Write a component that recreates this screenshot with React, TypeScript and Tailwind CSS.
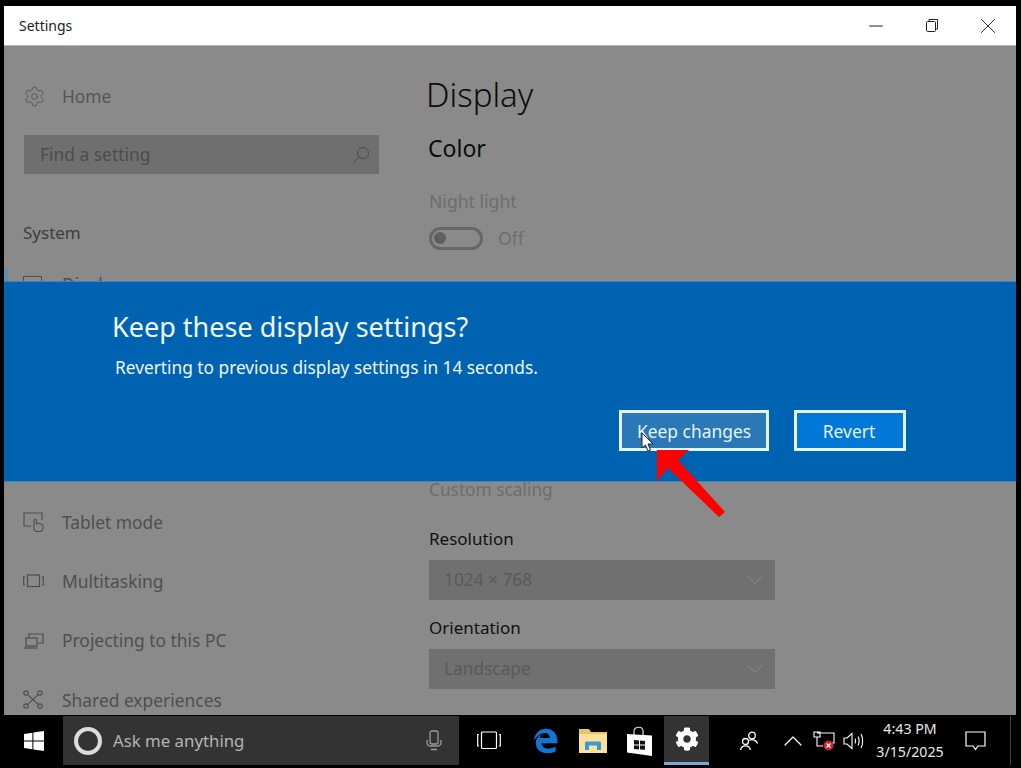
import { ChevronDown, ChevronUp, Minus, Settings, X } from "lucide-react";
import { FaCog } from "react-icons/fa";

const font = { fontFamily: '"Noto Sans", "Open Sans", sans-serif' };

function TabletIcon() {
  return (
    <svg width="21" height="20" viewBox="0 0 21 20" fill="none" stroke="#4e4e4e" strokeWidth="1.1">
      <path d="M8 14H1V1h18v7" />
      <path d="M11 17.500V8.500a1.200 1.200 0 0 1 2.400 0V12l1.800-.8a1 1 0 0 1 1.300.2l2.500 1.200c.7.400 1 1 1 1.700V16c0 2-1.600 3.500-3.600 3.500H14.500c-1.600 0-2.800-.8-3.500-2z" />
    </svg>
  );
}

function MultitaskIcon() {
  return (
    <svg width="21" height="14" viewBox="0 0 21 14" fill="none" stroke="#4e4e4e" strokeWidth="1.2">
      <rect x="4.500" y="1" width="12" height="11.500" />
      <path d="M2 2.500H.7v8.500H2M19 2.500h1.300v8.500H19" />
    </svg>
  );
}

function ProjectIcon() {
  return (
    <svg width="21" height="16" viewBox="0 0 21 16" fill="none" stroke="#4e4e4e" strokeWidth="1.2">
      <path d="M6 5V1h14v9h-5" />
      <rect x="3" y="5" width="11" height="8" />
      <path d="M.5 15h14" />
    </svg>
  );
}

function ShareIcon() {
  return (
    <svg width="20" height="19" viewBox="0 0 20 19" fill="none" stroke="#4e4e4e" strokeWidth="1.2">
      <circle cx="3" cy="3" r="2.200" />
      <circle cx="17" cy="3" r="2.200" />
      <circle cx="3" cy="16" r="2.200" />
      <circle cx="17" cy="16" r="2.200" />
      <path d="M4.600 4.600l10.800 9.800M15.400 4.600L4.600 14.400" />
    </svg>
  );
}

function SearchGlyph() {
  return (
    <svg width="18" height="18" viewBox="0 0 18 18" fill="none" stroke="#4c4c4c" strokeWidth="1">
      <circle cx="11" cy="7" r="5.500" />
      <path d="M7 11l-6 6" />
    </svg>
  );
}

function NavRow({ icon, label }: { icon: React.ReactNode; label: string }) {
  return (
    <div className="flex h-[59.3px] items-center">
      <div className="flex w-[39px] shrink-0 justify-start">{icon}</div>
      <span className="text-[17.4px] text-[#4f4f4f]">{label}</span>
    </div>
  );
}

function SelectBox({ value }: { value: string }) {
  return (
    <div className="flex h-[40px] w-[346px] items-center justify-between bg-[#707070] pl-[15px] pr-[6px]">
      <span className="text-[17.3px] text-[#5a5a5a]">{value}</span>
      <ChevronDown size={28} strokeWidth={0.8} color="#8f8f8f" />
    </div>
  );
}

function WindowsLogo() {
  return (
    <svg width="20" height="20" viewBox="0 0 20 20" fill="#fff">
      <path d="M0 3l8.400-1.200v7.600H0zM9.400 1.600L20 0v9.400H9.400zM0 10.400h8.400v7.800L0 17zM9.400 10.400H20V20L9.400 18.400z" />
    </svg>
  );
}

function EdgeLogo() {
  return (
    <svg width="25" height="25" viewBox="0 0 25 25">
      <path
        fill="#1277d3"
        d="M1 12.500C1.600 5.500 6.600.8 13 .8c6.600 0 11.400 4.700 11.400 12.400v2.100H8.600c.3 3.600 3 5.400 6.600 5.400 2.600 0 5-.7 7.400-2.100v5c-2.400 1.200-5.200 1.700-8.200 1.700C7.400 25 2.800 21 2.800 14.700c0-3.600 1.900-6.500 5.600-8.300-1 1.200-1.500 2.300-1.700 3.500h10.100c0-3.200-1.900-5-5-5C7.900 4.900 3.500 8 1 12.500z"
      />
    </svg>
  );
}

function FolderLogo() {
  return (
    <svg width="28" height="24" viewBox="0 0 28 24">
      <path fill="#e8c468" d="M0 0h10l2 3h16v3H0z" />
      <path fill="#fbe29a" d="M0 5h28v19H0z" />
      <path fill="#3b9ad6" d="M6 21v-7c0-1 .6-1.500 1.500-1.500h13c.9 0 1.500.5 1.500 1.500v7h-4v-4.500H10V21z" />
    </svg>
  );
}

function StoreLogo() {
  return (
    <svg width="27" height="30" viewBox="0 0 27 30">
      <path d="M8 9V5c0-5 9-5 9 0v5" fill="none" stroke="#ddd" strokeWidth="1.200" />
      <path fill="#fff" d="M1 8l25 1.500V30L1 26.500z" />
      <path fill="#111" d="M8 14l5 .4v4H8zM14 14.500l5 .4v3.600h-5zM8 19.400h5v4l-5-.4zM14 19.400h5v4.400l-5-.4z" />
    </svg>
  );
}

function PeopleIcon() {
  return (
    <svg width="18" height="20" viewBox="0 0 18 20" fill="none" stroke="#fff" strokeWidth="1.300">
      <circle cx="12" cy="4.500" r="3.300" />
      <path d="M9.500 9.500c2-1.500 6.500-1 8 3" />
      <circle cx="5.500" cy="10.500" r="3" />
      <path d="M.7 19c.5-5.500 9-5.500 9.600 0" />
    </svg>
  );
}

function NetworkIcon() {
  return (
    <svg width="22" height="20" viewBox="0 0 22 20" fill="none">
      <path d="M4 2h17v10h-4M1 1h6v5H1zM4 6v9h6" stroke="#fff" strokeWidth="1.100" />
      <circle cx="15.500" cy="14.500" r="5" fill="#c8232f" />
      <path d="M13.500 12.500l4 4M17.500 12.500l-4 4" stroke="#fff" strokeWidth="1.300" />
    </svg>
  );
}

function SpeakerIcon() {
  return (
    <svg width="21" height="18" viewBox="0 0 21 18" fill="none" stroke="#fff" strokeWidth="1.100">
      <path d="M1 6h3l5-4.500v15L4 12H1z" />
      <path d="M12 6.500c.8 1.500.8 3.500 0 5M15 4.500c1.400 2.800 1.400 6.200 0 9M18 2c2.200 4 2.200 10 0 14" />
    </svg>
  );
}

function MicIcon() {
  return (
    <svg width="16" height="21" viewBox="0 0 16 21" fill="none" stroke="#9a9a9a" strokeWidth="1.300">
      <rect x="4" y="1" width="8" height="13" rx="2" />
      <path d="M1 10v2.500c0 2.500 2 3.500 4 3.500h6c2 0 4-1 4-3.500V10M5 19.500h6" />
    </svg>
  );
}

function TaskViewIcon() {
  return (
    <svg width="24" height="19" viewBox="0 0 24 19" fill="none" stroke="#fff" strokeWidth="1.200">
      <rect x="4.500" y="1" width="15" height="16.500" rx="1" />
      <path d="M2 3.500H.7v11.500H2M22 3.500h1.300v11.500H22" />
    </svg>
  );
}

function ActionCenterIcon() {
  return (
    <svg width="21" height="20" viewBox="0 0 21 20" fill="none" stroke="#fff" strokeWidth="1.200">
      <path d="M1 1h19v14h-7l-2.500 3.500L8 15H1z" />
    </svg>
  );
}

function RestoreIcon() {
  return (
    <svg width="12" height="13" viewBox="0 0 12 13" fill="none" stroke="#222" strokeWidth="1">
      <rect x="0.500" y="2.500" width="9" height="10" rx="1" />
      <path d="M3 2.500V.5h8.500v9.500H9.500" />
    </svg>
  );
}

function Dialog() {
  return (
    <div className="absolute inset-x-0 top-[275px] h-[201px] border-y border-[#3f85bd] bg-[#0063b1] pl-[108px] pr-[110px] text-white">
      <h2 className="mt-[25px] text-[27px] leading-[40px] text-[#eef6fb]">Keep these display settings?</h2>
      <p className="ml-[3px] mt-[7px] text-[17.3px] leading-[28px] text-[#eef6fb]">
        Reverting to previous display settings in 14 seconds.
      </p>
      <div className="mt-[28px] flex justify-end gap-[25px]">
        <button className="h-[41px] w-[150px] border-[3px] border-[#e6f3fa] bg-[#2a78b6] pt-[1px] text-[17.4px] text-[#e6f3fa]">
          Keep changes
        </button>
        <button className="h-[41px] w-[112px] border-[3px] border-[#e6f3fa] bg-[#0078d7] pr-[2px] pt-[1px] text-[17.4px] text-[#e6f3fa]">
          Revert
        </button>
      </div>
    </div>
  );
}

export default function App() {
  return (
    <div className="relative flex h-[768px] w-[1021px] flex-col overflow-hidden bg-black pt-[6px]" style={font}>
      <div className="relative ml-[4px] flex h-[709px] w-[1012px] flex-col overflow-hidden">
        {/* title bar */}
        <div className="flex h-[40px] shrink-0 items-center justify-between border-b border-[#b5b5b5] bg-white pl-[15px]">
          <span className="text-[14px] text-[#222]">Settings</span>
          <div className="flex items-center">
            <div className="flex w-[48px] justify-center"><Minus size={22} strokeWidth={1.1} color="#222" /></div>
            <div className="ml-[8px] mr-[4px] flex w-[48px] justify-center"><RestoreIcon /></div>
            <div className="flex w-[56px] justify-center"><X size={26} strokeWidth={0.9} color="#222" /></div>
          </div>
        </div>

        <div className="flex flex-1 overflow-hidden bg-[#8a8a8a]">
          {/* sidebar */}
          <aside className="w-[422px] shrink-0 pl-[19px]">
            <div className="mt-[36px] flex h-[30px] items-center text-[#555]">
              <Settings size={23} strokeWidth={1} color="#555" className="-mt-[1px]" />
              <span className="ml-[16px] text-[17.3px]">Home</span>
            </div>
            <div className="ml-[1px] mt-[23px] flex h-[39px] w-[355px] items-center justify-between bg-[#6f6f6f] pl-[16px] pr-[9px]">
              <span className="text-[17.4px] text-[#4c4c4c]">Find a setting</span>
              <SearchGlyph />
            </div>
            <div className="mt-[44px] text-[17px] leading-[30px] text-[#3d3d3d]">System</div>
            <div className="relative mt-[6px]">
              <div className="absolute -left-[19px] top-[14px] h-[14px] w-[4px] bg-[#5d8cb0]" />
              <NavRow icon={<div className="h-[16px] w-[19px] border border-[#4e4e4e]" />} label="Display" />
            </div>
            <div className="mt-[179px]">
              <NavRow icon={<TabletIcon />} label="Tablet mode" />
              <NavRow icon={<MultitaskIcon />} label="Multitasking" />
              <NavRow icon={<ProjectIcon />} label="Projecting to this PC" />
              <NavRow icon={<ShareIcon />} label="Shared experiences" />
            </div>
          </aside>

          {/* main pane */}
          <main className="flex-1 pl-[2px]">
            <h1 className="-ml-[2px] mt-[24px] text-[33px] font-light leading-[50px] text-[#0c0c0c]">Display</h1>
            <h3 className="mt-[10px] text-[23px] leading-[36px] text-[#0c0c0c]">Color</h3>
            <div className="ml-[1px] mt-[22px] text-[17.6px] leading-[26px] text-[#6d6d6d]">Night light</div>
            <div className="ml-[1px] mt-[11px] flex items-center">
              <div className="flex h-[23px] w-[54px] items-center rounded-full border-[3px] border-[#666] pl-[2px]">
                <div className="h-[12px] w-[12px] rounded-full bg-[#5f5f5f]" />
              </div>
              <span className="ml-[15px] text-[17.6px] text-[#6d6d6d]">Off</span>
            </div>
            <div className="ml-[1px] mt-[226px] text-[17.3px] leading-[26px] text-[#6d6d6d]">Custom scaling</div>
            <div className="ml-[1px] mt-[23px] text-[17px] leading-[26px] text-[#111]">Resolution</div>
            <div className="ml-[1px] mt-[8px]"><SelectBox value="1024 × 768" /></div>
            <div className="ml-[1px] mt-[15px] text-[17px] leading-[26px] text-[#111]">Orientation</div>
            <div className="ml-[1px] mt-[8px]"><SelectBox value="Landscape" /></div>
          </main>
        </div>

        <Dialog />
      </div>

      {/* taskbar */}
      <div className="flex h-[50px] w-full items-center border-t border-black bg-black text-white">
        <div className="flex h-full w-[63px] items-center justify-center pl-[4px]"><WindowsLogo /></div>
        <div className="flex h-full w-[396px] items-center bg-[#333] pl-[11px] pr-[17px]">
          <div className="h-[28px] w-[28px] rounded-full border-[4px] border-[#dcdcdc]" />
          <span className="ml-[11px] flex-1 text-[16.8px] text-[#b4b4b4]">Ask me anything</span>
          <MicIcon />
        </div>
        <div className="flex w-[60px] justify-center"><TaskViewIcon /></div>
        <div className="flex w-[52px] justify-center"><EdgeLogo /></div>
        <div className="flex w-[44px] justify-center"><FolderLogo /></div>
        <div className="flex w-[49px] justify-center"><StoreLogo /></div>
        <div className="flex h-full w-[45px] items-center justify-center border-b-[3px] border-[#7ea6d0] bg-[#333]">
          <FaCog size={24} color="#fff" />
        </div>
        <div className="ml-[30px] flex w-[19px] justify-center"><PeopleIcon /></div>
        <div className="ml-[25px] flex w-[20px] justify-center"><ChevronUp size={32} strokeWidth={0.9} color="#fff" className="shrink-0" /></div>
        <div className="ml-[10px] flex w-[22px] justify-center"><NetworkIcon /></div>
        <div className="ml-[8px] flex w-[21px] justify-center"><SpeakerIcon /></div>
        <div className="ml-[10px] flex w-[72px] flex-col items-center text-[14.2px] leading-[22.5px] text-[#e8e8e8]">
          <span>4:43 PM</span>
          <span>3/15/2025</span>
        </div>
        <div className="ml-[19px] flex w-[21px] justify-center"><ActionCenterIcon /></div>
        <div className="ml-[24px] h-full w-px bg-[#444]" />
      </div>

      {/* annotation arrow and mouse pointer on top of the screenshot */}
      <svg className="absolute left-[630px] top-[425px]" width="110" height="100" viewBox="630 425 110 100">
        <path fill="#ff0000" d="M657 450h32l-11 10 47 52-6 5-51-49-11 13z" />
        <path fill="#fff" stroke="#222" strokeWidth="1" d="M642 433v15l3.500-3 2.500 6 2.500-1-2.500-6h5z" />
      </svg>
    </div>
  );
}
